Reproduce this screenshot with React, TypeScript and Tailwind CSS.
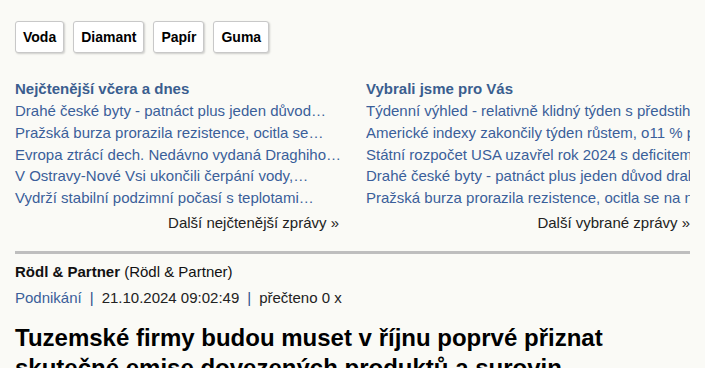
import React from "react";

const left = [
  "Drahé české byty - patnáct plus jeden důvod…",
  "Pražská burza prorazila rezistence, ocitla se…",
  "Evropa ztrácí dech. Nedávno vydaná Draghiho…",
  "V Ostravy-Nové Vsi ukončili čerpání vody,…",
  "Vydrží stabilní podzimní počasí s teplotami…",
];
const right = [
  "Týdenní výhled - relativně klidný týden s předstihovými ukazateli",
  "Americké indexy zakončily týden růstem, o11 % posílil Nasdaq",
  "Státní rozpočet USA uzavřel rok 2024 s deficitem 1,8 bilionu",
  "Drahé české byty - patnáct plus jeden důvod drahoty bydlení",
  "Pražská burza prorazila rezistence, ocitla se na nových maximech",
];

export default function App() {
  return (
    <div
      className="w-[705px] h-[368px] overflow-hidden bg-[#fafaf6] px-[15px] pt-[21px] text-[15px] text-[#111]"
      style={{ fontFamily: '"Liberation Sans", Arial, sans-serif' }}
    >
      <div className="flex gap-[9px]">
        {["Voda", "Diamant", "Papír", "Guma"].map((t) => (
          <button
            key={t}
            className="h-[32px] px-[7px] bg-white border border-[#c8c8c8] rounded-[3px] shadow-[1px_1px_2px_rgba(0,0,0,0.18)] text-[14px] font-bold text-black"
          >
            {t}
          </button>
        ))}
      </div>

      <div className="grid grid-cols-2 gap-[27px] mt-[25px]">
        <div className="min-w-0">
          <div className="font-bold text-[#3a5e8f] leading-[22px]">Nejčtenější včera a dnes</div>
          {left.map((t, i) => (
            <div key={i} className="whitespace-nowrap leading-[21.75px] text-[#3a5f9a]">
              {t}
            </div>
          ))}
          <div className="text-right text-[#222] leading-[22px] mt-[3px]">Další nejčtenější zprávy »</div>
        </div>
        <div className="min-w-0">
          <div className="font-bold text-[#3a5e8f] leading-[22px]">Vybrali jsme pro Vás</div>
          {right.map((t, i) => (
            <div key={i} className="overflow-hidden whitespace-nowrap leading-[21.75px] text-[#3a5f9a]">
              {t}
            </div>
          ))}
          <div className="text-right text-[#222] leading-[22px] mt-[3px]">Další vybrané zprávy »</div>
        </div>
      </div>

      <div className="h-[3px] bg-[#bebebe] mt-[17px]" />

      <div className="mt-[7px] leading-[22px]">
        <span className="font-bold">Rödl &amp; Partner</span> (Rödl &amp; Partner)
      </div>
      <div className="mt-[4px] leading-[22px] text-[#222]">
        <span className="text-[#3a5f9a]">Podnikání</span>
        <span className="mx-[8px] text-[#2d4f8a]">|</span>
        21.10.2024 09:02:49
        <span className="mx-[8px] text-[#2d4f8a]">|</span>
        přečteno 0 x
      </div>
      <h1 className="mt-[14px] text-[24px] font-bold leading-[30px] text-black">
        Tuzemské firmy budou muset v říjnu poprvé přiznat skutečné emise dovezených produktů a surovin
      </h1>
    </div>
  );
}
